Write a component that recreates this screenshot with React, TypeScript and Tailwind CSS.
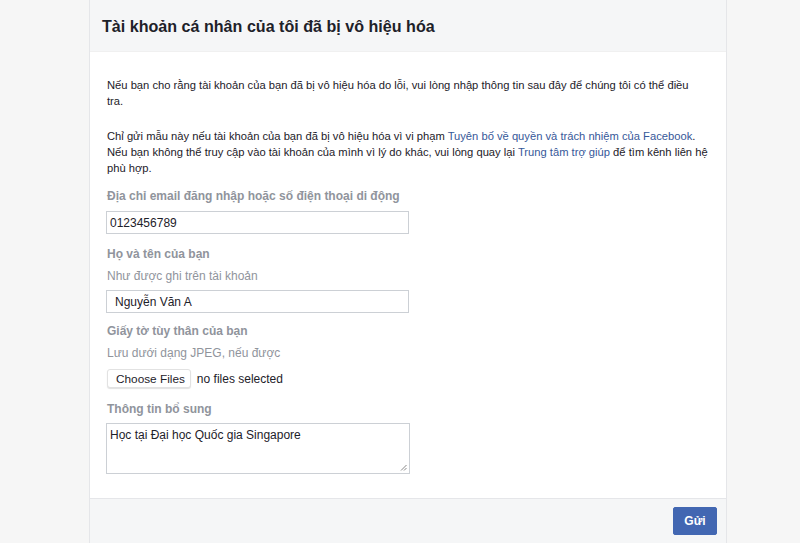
import React from "react";

export default function App() {
  return (
    <div
      className="w-[800px] h-[543px] bg-[#f6f6f6] overflow-hidden"
      style={{ fontFamily: '"Liberation Sans", Arial, sans-serif' }}
    >
      <div className="ml-[89px] w-[638px] h-[543px] border-x border-[#e5e6e9] bg-white flex flex-col">
        <div className="h-[52px] bg-[#f5f6f7] flex items-center px-[12px] border-b border-[#f0f0f0]">
          <h1 className="text-[16.1px] font-bold text-[#1d2129] leading-[20px] mt-[1px]">
            Tài khoản cá nhân của tôi đã bị vô hiệu hóa
          </h1>
        </div>
        <div className="pl-[17px] pr-[13px] pt-[25px] text-[12px] leading-[16px] text-[#1d2129] flex-1">
          <p className="max-w-[590px] text-[11.2px] leading-[16px]">
            Nếu bạn cho rằng tài khoản của bạn đã bị vô hiệu hóa do lỗi, vui lòng nhập thông tin sau đây để chúng tôi có thể điều tra.
          </p>
          <p className="mt-[19px] text-[11.2px] leading-[16px]">
            Chỉ gửi mẫu này nếu tài khoản của bạn đã bị vô hiệu hóa vì vi phạm{" "}
            <span className="text-[#365899]">Tuyên bố về quyền và trách nhiệm của Facebook</span>.
            Nếu bạn không thể truy cập vào tài khoản của mình vì lý do khác, vui lòng quay lại{" "}
            <span className="text-[#365899]">Trung tâm trợ giúp</span> để tìm kênh liên hệ phù hợp.
          </p>
          <div className="mt-[12px] font-bold text-[#90949c]">Địa chỉ email đăng nhập hoặc số điện thoại di động</div>
          <div className="mt-[7px] w-[303px] h-[23px] ml-[-1px] border border-[#ccd0d5] flex items-center px-[3px] text-[12px] text-[#1d2129]">
            0123456789
          </div>
          <div className="mt-[12px] font-bold text-[#90949c]">Họ và tên của bạn</div>
          <div className="mt-[6px] text-[#90949c]">Như được ghi trên tài khoản</div>
          <div className="mt-[6px] w-[303px] h-[23px] ml-[-1px] border border-[#ccd0d5] flex items-center px-[8px] text-[12px] text-[#1d2129]">
            Nguyễn Văn A
          </div>
          <div className="mt-[10px] font-bold text-[#90949c]">Giấy tờ tùy thân của bạn</div>
          <div className="mt-[6px] text-[#90949c]">Lưu dưới dạng JPEG, nếu được</div>
          <div className="mt-[8px] flex items-center gap-[6px]">
            <div className="h-[19px] pl-[8px] pr-[5px] flex items-center bg-white border border-[#e2e2e2] rounded-[3px] shadow-[0_1px_1px_rgba(0,0,0,0.12)] text-[11.8px] text-[#1d2129]">
              Choose Files
            </div>
            <span className="text-[#1d2129]">no files selected</span>
          </div>
          <div className="mt-[13px] font-bold text-[#90949c]">Thông tin bổ sung</div>
          <div className="relative mt-[6px] w-[304px] h-[51px] ml-[-1px] border border-[#ccd0d5] px-[3px] pt-[3px] text-[12px] text-[#1d2129]">
            Học tại Đại học Quốc gia Singapore
            <svg className="absolute right-[2px] bottom-[2px]" width="7" height="7" viewBox="0 0 7 7">
              <line x1="1" y1="6.5" x2="6.5" y2="1" stroke="#888" strokeWidth="1" />
              <line x1="4" y1="6.5" x2="6.5" y2="4" stroke="#888" strokeWidth="1" />
            </svg>
          </div>
        </div>
        <div className="h-[45px] bg-[#f5f6f7] border-t border-[#e5e6e9] flex items-start justify-end pr-[9px] pt-[8px]">
          <button className="h-[28px] w-[44px] bg-[#4267b2] border border-[#4267b2] rounded-[2px] text-white text-[12px] font-bold">
            Gửi
          </button>
        </div>
      </div>
    </div>
  );
}
